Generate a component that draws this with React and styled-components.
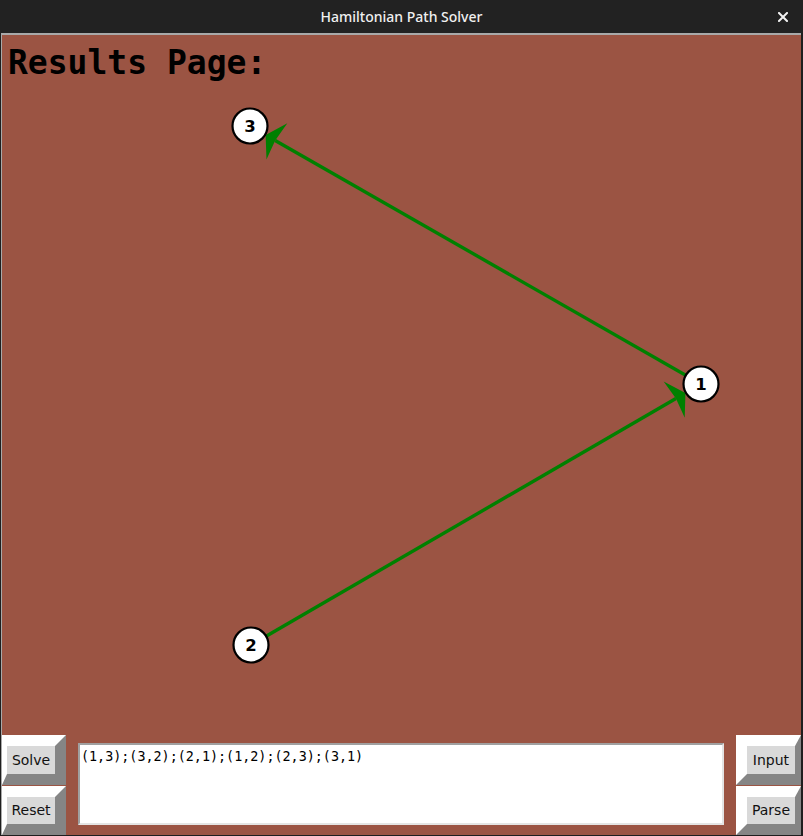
import React from 'react';
import styled, { createGlobalStyle } from 'styled-components';

const GlobalStyle = createGlobalStyle`
  html, body {
    margin: 0;
    padding: 0;
    background: #1e1e1e;
  }
`;

const BROWN = '#9b5443';
const GREEN = '#008000';

// node centres, in canvas coordinates
const nodes = [
  { id: 1, x: 699, y: 349 },
  { id: 2, x: 249, y: 610 },
  { id: 3, x: 248, y: 91 },
];

const path = [2, 1, 3];
const RADIUS = 18;

function arrow(from, to) {
  const dx = to.x - from.x;
  const dy = to.y - from.y;
  const len = Math.hypot(dx, dy);
  const ux = dx / len;
  const uy = dy / len;
  // tip sits on the rim of the target circle
  const tip = { x: to.x - ux * RADIUS, y: to.y - uy * RADIUS };
  const px = -uy;
  const py = ux;
  const back = (d) => ({ x: tip.x - ux * d, y: tip.y - uy * d });
  const base = back(13);
  const neck = back(11);
  const pts = [
    tip,
    { x: base.x + px * 21, y: base.y + py * 21 },
    neck,
    { x: base.x - px * 21, y: base.y - py * 21 },
  ];
  return { line: { x1: from.x, y1: from.y, x2: neck.x, y2: neck.y }, head: pts.map((p) => `${p.x},${p.y}`).join(' ') };
}

function App() {
  const byId = Object.fromEntries(nodes.map((n) => [n.id, n]));
  const edges = path.slice(1).map((id, i) => arrow(byId[path[i]], byId[id]));

  return (
    <>
      <GlobalStyle />
      <Window>
        <TitleBar>
          <span />
          <Title>Hamiltonian Path Solver</Title>
          <Close aria-label="close">
            <svg width="10" height="10" viewBox="0 0 10 10">
              <path d="M1 1 L9 9 M9 1 L1 9" stroke="#f2f2f2" strokeWidth="2" strokeLinecap="square" />
            </svg>
          </Close>
        </TitleBar>
        <Frame>
          <Canvas>
            <Graph width="799" height="700">
              {edges.map((e, i) => (
                <g key={i}>
                  <line {...e.line} stroke={GREEN} strokeWidth="3.4" />
                  <polygon points={e.head} fill={GREEN} />
                </g>
              ))}
              {nodes.map((n) => (
                <g key={n.id}>
                  <circle cx={n.x} cy={n.y} r={RADIUS - 0.5} fill="#fff" stroke="#000" strokeWidth="2.2" />
                  <NodeLabel x={n.x} y={n.y + 6} textAnchor="middle">{n.id}</NodeLabel>
                </g>
              ))}
            </Graph>
            <Heading>Results Page:</Heading>
          </Canvas>
          <BottomBar>
            <ButtonStack>
              <Button $side="left">Solve</Button>
              <Button $side="left">Reset</Button>
            </ButtonStack>
            <EdgeInput readOnly defaultValue="(1,3);(3,2);(2,1);(1,2);(2,3);(3,1)" />
            <ButtonStack>
              <Button $side="right">Input</Button>
              <Button $side="right">Parse</Button>
            </ButtonStack>
          </BottomBar>
        </Frame>
      </Window>
    </>
  );
}

export default App;

const Window = styled.div`
  width: 803px;
  height: 836px;
  display: flex;
  flex-direction: column;
  background: #1e1e1e;
  overflow: hidden;
`;

const TitleBar = styled.header`
  height: 33px;
  flex: none;
  display: grid;
  grid-template-columns: 1fr auto 1fr;
  align-items: center;
  background: #222222;
`;

const Title = styled.span`
  font-family: "Noto Sans", "DejaVu Sans", sans-serif;
  font-size: 14px;
  font-weight: 500;
  color: #f0f0f0;
`;

const Close = styled.span`
  justify-self: end;
  margin-right: 15px;
  display: flex;
`;

const Frame = styled.div`
  flex: 1;
  display: flex;
  flex-direction: column;
  margin: 0 2px 1px 1px;
  border-top: 2px solid #a9a9a9;
  border-left: 1px solid #a9a9a9;
`;

const Canvas = styled.div`
  position: relative;
  height: 700px;
  flex: none;
  background: ${BROWN};
`;

const Graph = styled.svg`
  position: absolute;
  left: 0;
  top: 0;
`;

const NodeLabel = styled.text`
  font-family: "DejaVu Sans", sans-serif;
  font-weight: bold;
  font-size: 16.5px;
  fill: #000;
`;

const Heading = styled.h1`
  position: relative;
  margin: 0;
  padding: 9px 0 0 6px;
  font-family: "DejaVu Sans Mono", monospace;
  font-weight: bold;
  font-size: 33px;
  line-height: 1.15;
  color: #000;
`;

const BottomBar = styled.div`
  flex: 1;
  display: flex;
  background: ${BROWN};
`;

const ButtonStack = styled.div`
  display: flex;
  flex-direction: column;
  gap: 1px;
`;

const Button = styled.div`
  flex: 1;
  display: flex;
  align-items: center;
  justify-content: center;
  width: 48px;
  background: #d9d9d9;
  border-style: solid;
  border-color: #ffffff #858585 #858585 #ffffff;
  border-width: ${(p) => (p.$side === 'left' ? '11px 11px 11px 5px' : '11px 6px 11px 11px')};
  font-family: "DejaVu Sans", sans-serif;
  font-size: 14px;
  color: #111;
  cursor: default;
`;

const EdgeInput = styled.textarea`
  flex: 1;
  margin: 8px 12px 10px;
  padding: 4px 1px;
  border-style: solid;
  border-width: 2px;
  border-color: #a0a0a0 #e4e4e4 #e4e4e4 #a0a0a0;
  background: #fff;
  resize: none;
  outline: none;
  overflow: hidden;
  font-family: "DejaVu Sans Mono", monospace;
  font-size: 13.4px;
  line-height: 16px;
  color: #000;
`;
